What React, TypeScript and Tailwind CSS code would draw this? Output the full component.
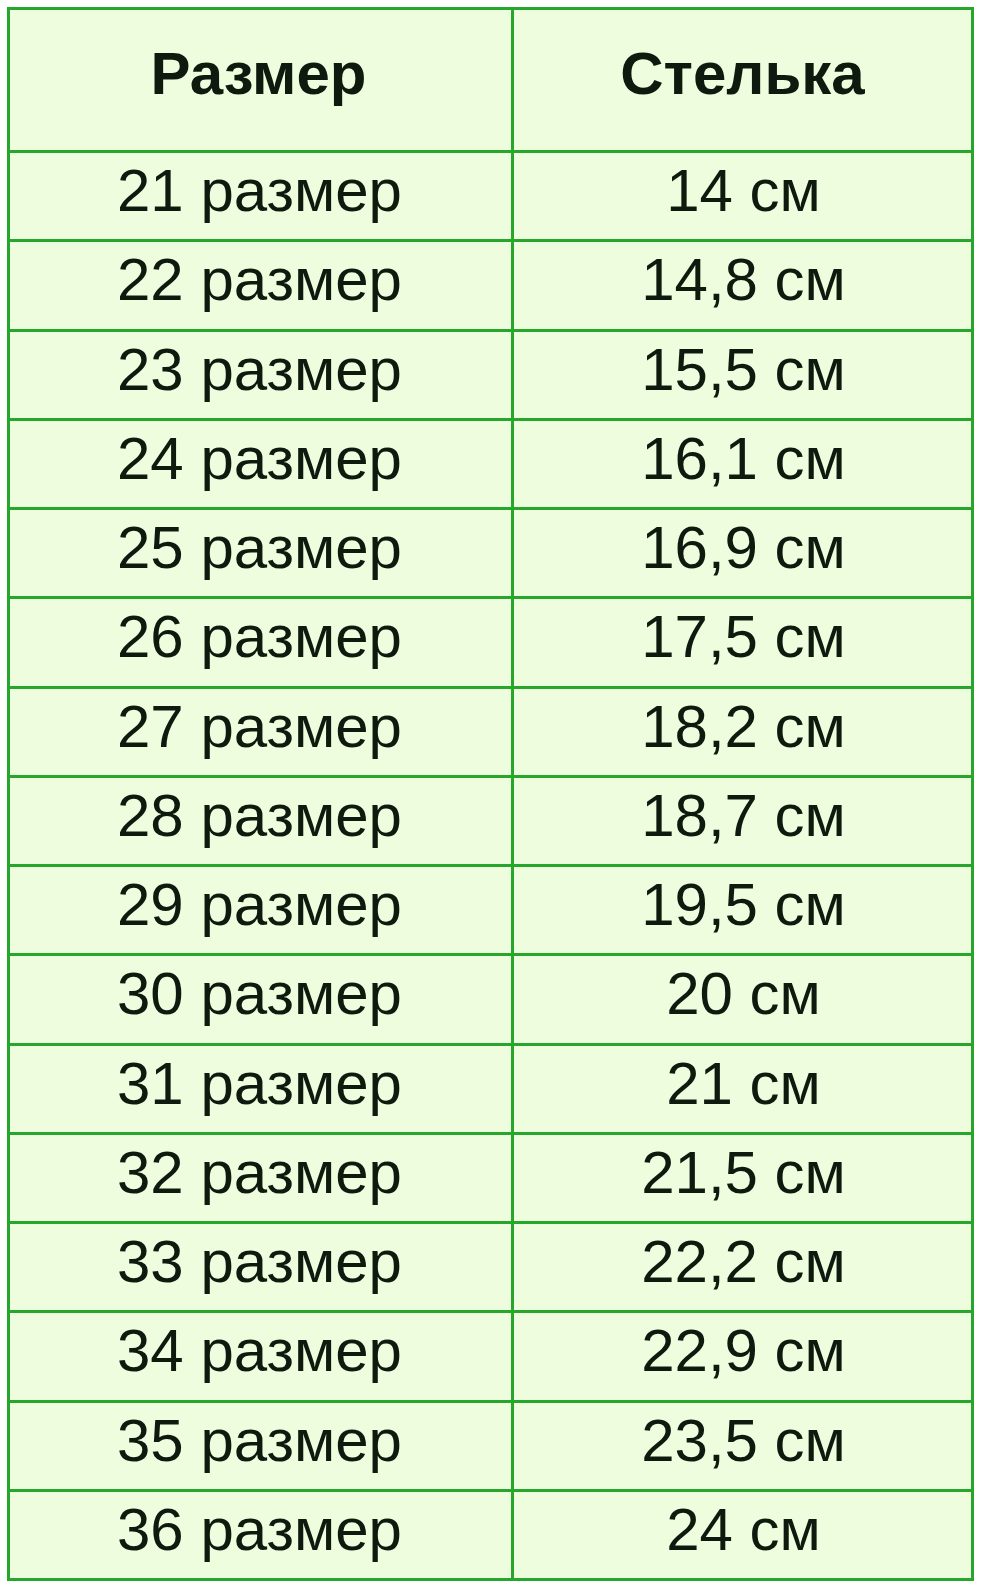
const rows: [string, string][] = [
  ['21 размер', '14 см'],
  ['22 размер', '14,8 см'],
  ['23 размер', '15,5 см'],
  ['24 размер', '16,1 см'],
  ['25 размер', '16,9 см'],
  ['26 размер', '17,5 см'],
  ['27 размер', '18,2 см'],
  ['28 размер', '18,7 см'],
  ['29 размер', '19,5 см'],
  ['30 размер', '20 см'],
  ['31 размер', '21 см'],
  ['32 размер', '21,5 см'],
  ['33 размер', '22,2 см'],
  ['34 размер', '22,9 см'],
  ['35 размер', '23,5 см'],
  ['36 размер', '24 см'],
];

export default function App() {
  return (
    <div className="w-[981px] h-[1590px] bg-white pt-[7px] pl-[7px] font-['Liberation_Sans',Arial,sans-serif] text-[#0e1a0e]">
      <div className="w-[967px] h-[1574px] border-[3px] border-[#26a62a] bg-[#effddf] flex flex-col">
        {/* header */}
        <div className="h-[140px] flex font-bold text-[60px] leading-none">
          <div className="w-[504px] border-r-[3px] border-[#26a62a] flex items-center justify-center pb-[12px] pr-[4px]">
            Размер
          </div>
          <div className="flex-1 flex items-center justify-center pb-[12px]">Стелька</div>
        </div>

        {rows.map(([size, insole]) => (
          <div key={size} className="flex-1 flex border-t-[3px] border-[#26a62a] text-[60px] leading-none">
            <div className="w-[504px] border-r-[3px] border-[#26a62a] flex items-center justify-center pb-[10px] pr-[2px]">
              {size}
            </div>
            <div className="flex-1 flex items-center justify-center pb-[10px] pl-[2px]">{insole}</div>
          </div>
        ))}
      </div>
    </div>
  );
}
